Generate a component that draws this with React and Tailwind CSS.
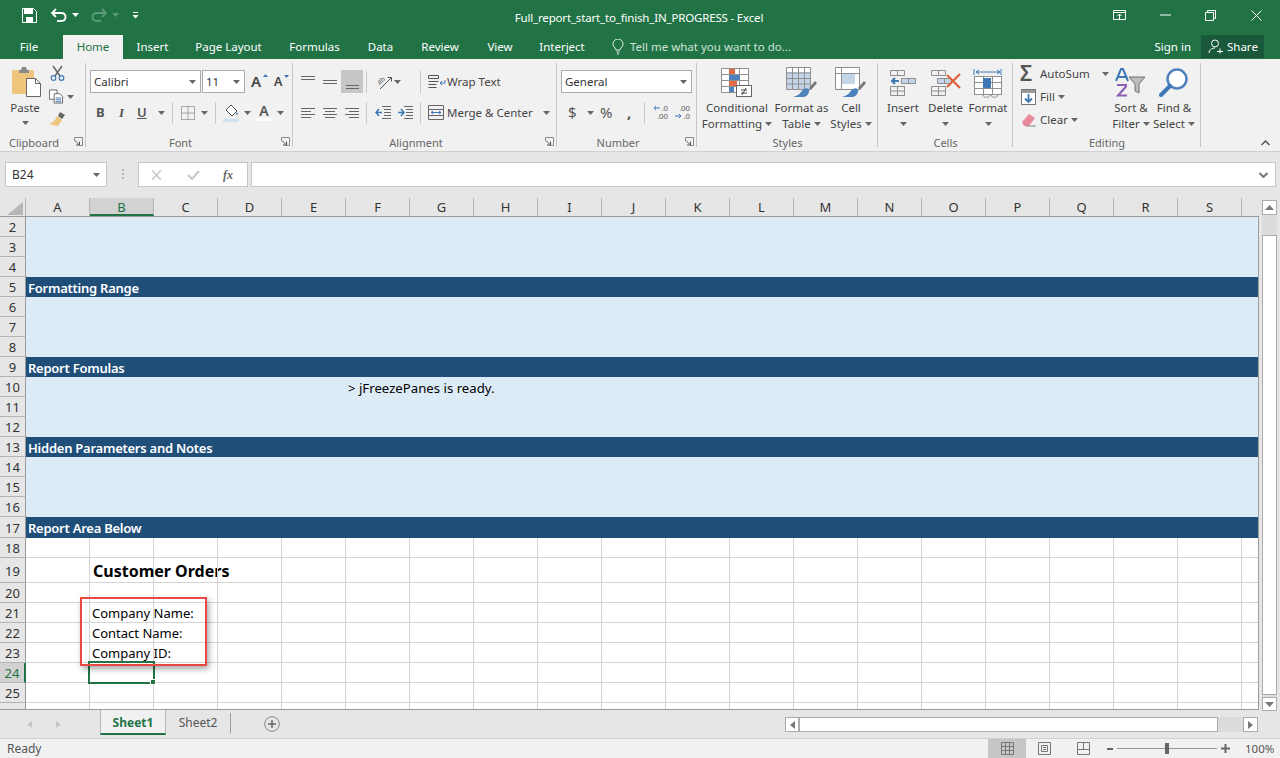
const ui = { fontFamily: '"Noto Sans", "Open Sans", sans-serif' };

const Caret = ({ className = "", color = "#666" }) => (
  <svg width="7" height="4" viewBox="0 0 7 4" className={"shrink-0 " + className}><path d="M0 0h7L3.500 4z" fill={color} /></svg>
);

const Sep = ({ className = "" }) => <div className={"w-px h-[22px] bg-[#c8c8c8] shrink-0 " + className} />;

function Launcher() {
  return (
    <svg width="9" height="9" viewBox="0 0 9 9" className="absolute right-[3px] bottom-[5px]">
      <path d="M.5 4V.5H8.500V8.500H5" fill="none" stroke="#888" />
      <path d="M1 3.500L5.500 8M5.500 4.500V8H2" fill="none" stroke="#555" />
    </svg>
  );
}

function Group({ w, label, launcher, children }) {
  return (
    <div className="relative shrink-0 h-[88px] mt-[4px] flex flex-col" style={{ width: w }}>
      <div className="flex-1 min-h-0">{children}</div>
      <div className={"h-[17px] text-center text-[11px] leading-[17px] text-[#666] " + (launcher ? "pr-[18px]" : "")}>{label}</div>
      {launcher && <Launcher />}
      <div className="absolute right-0 top-0 bottom-[4px] w-px bg-[#c6c6c6]" />
    </div>
  );
}

function LargeBtn({ w, icon, l1, l2 }) {
  return (
    <div className="flex flex-col items-center shrink-0 text-[11.500px] leading-[16px] text-[#444]" style={{ width: w }}>
      <div className="h-[34px] flex items-center justify-center">{icon}</div>
      <div className="whitespace-nowrap">{l1}</div>
      <div className="whitespace-nowrap flex items-center gap-[3px] h-[16px]">{l2}<Caret /></div>
    </div>
  );
}

const CELLGRID = "#8f8f8f";

function GridBase({ w = 30, h = 26, cols = 3, rows = 4, x = 0.5, y = 0.5 }) {
  const cw = w / cols, rh = h / rows;
  const d = [];
  for (let i = 0; i <= cols; i++) d.push(`M${x + i * cw} ${y}V${y + h}`);
  for (let i = 0; i <= rows; i++) d.push(`M${x} ${y + i * rh}H${x + w}`);
  return <path d={d.join("")} fill="none" stroke={CELLGRID} />;
}

const CondIcon = () => (
  <svg width="32" height="30" viewBox="0 0 32 30">
    <rect x=".5" y=".5" width="27" height="24" fill="#fff" />
    <GridBase w={27} h={24} cols={3} rows={4} />
    <rect x="8" y="1" width="6" height="5" fill="#e06c47" />
    <rect x="8" y="7" width="11" height="5" fill="#4d82bc" />
    <rect x="8" y="13" width="8" height="5" fill="#e06c47" />
    <rect x="8" y="19" width="5" height="5" fill="#4d82bc" />
    <rect x="15.500" y="17.500" width="15" height="11" fill="#fff" stroke="#666" />
    <path d="M20 22h6M20 25h6M25 20l-4 7" stroke="#444" fill="none" />
  </svg>
);

const TableIcon = () => (
  <svg width="32" height="32" viewBox="0 0 32 32">
    <rect x=".5" y=".5" width="24" height="22" fill="#fff" />
    <rect x="1" y="5" width="24" height="18" fill="#c5d5e8" />
    <GridBase w={24} h={22} cols={4} rows={4} />
    <path d="M23 21l6-7 2 2-6 7z" fill="#777" />
    <path d="M18 22c4-2 6 1 5 3-1 3-3 5-7 5h-9c3-1 6-2 8-5 1-1 2-3 3-3z" fill="#4d82bc" />
  </svg>
);

const CellStyleIcon = () => (
  <svg width="32" height="32" viewBox="0 0 32 32">
    <rect x=".5" y=".5" width="24" height="22" fill="#fff" />
    <rect x="6" y="6" width="14" height="11" fill="#c5d5e8" />
    <path d="M.5.500h24v22H.5zM6.500.500v22M.5 6.500h24" fill="none" stroke={CELLGRID} />
    <path d="M23 21l6-7 2 2-6 7z" fill="#777" />
    <path d="M18 22c4-2 6 1 5 3-1 3-3 5-7 5h-9c3-1 6-2 8-5 1-1 2-3 3-3z" fill="#4d82bc" />
  </svg>
);

const InsertIcon = () => (
  <svg width="28" height="28" viewBox="0 0 28 28">
    <path d="M1.500 1.500h14v5h-14zM8.500 1.500v5M1.500 17.500h14v9h-14zM8.500 17.500v9M1.500 22h14" fill="none" stroke={CELLGRID} />
    <path d="M12.500 9.500h14v5h-14zM19.500 9.500v5" fill="#c5d5e8" stroke={CELLGRID} />
    <path d="M10 12H3M6 9l-3 3 3 3" fill="none" stroke="#3f78b5" strokeWidth="2" />
  </svg>
);

const DeleteIcon = () => (
  <svg width="32" height="28" viewBox="0 0 32 28">
    <path d="M1.500 1.500h14v5h-14zM8.500 1.500v5M1.500 17.500h14v9h-14zM8.500 17.500v9M1.500 22h14" fill="none" stroke={CELLGRID} />
    <path d="M7.500 9.500h14v5h-14zM14.500 9.500v5" fill="#c5d5e8" stroke={CELLGRID} />
    <path d="M17 6l13 13M30 5L17 18" stroke="#e0633c" strokeWidth="2.200" fill="none" />
  </svg>
);

const FormatIcon = () => (
  <svg width="30" height="31" viewBox="0 0 30 31">
    <path d="M1 1v6M28 1v6M3 4h24M3 4l3-2M3 4l3 2M27 4l-3-2M27 4l-3 2" stroke="#3f78b5" fill="none" />
    <rect x="1.500" y="8.500" width="27" height="18" fill="#fff" stroke={CELLGRID} />
    <path d="M10.500 8.500v18M19.500 8.500v18M1.500 14.500h27M1.500 20.500h27" stroke={CELLGRID} fill="none" />
    <rect x="10" y="10" width="8" height="10" fill="#3f78b5" />
    <path d="M10 27c0 3 7 3 7 0M18 27c0 3 7 3 7 0" stroke={CELLGRID} fill="none" />
  </svg>
);

const SortIcon = () => (
  <svg width="32" height="30" viewBox="0 0 32 30">
    <path d="M1 13L6 1h2l5 12M3.500 9h7" stroke="#3f78b5" strokeWidth="2" fill="none" />
    <path d="M2 17h9v1.500L3 27.500h9" stroke="#8a5fb5" strokeWidth="2" fill="none" />
    <path d="M14 9h16l-6 7v9l-4-2v-7z" fill="#bdbdbd" stroke="#707070" />
  </svg>
);

const FindIcon = () => (
  <svg width="30" height="30" viewBox="0 0 30 30">
    <circle cx="18" cy="11" r="9.500" fill="#fff" stroke="#4d82bc" strokeWidth="2.500" />
    <path d="M11 18L2 27" stroke="#3f78b5" strokeWidth="4" strokeLinecap="round" />
  </svg>
);

const Lines = ({ rows, color = "#666" }) => (
  <svg width="16" height="16" viewBox="0 0 16 16" className="shrink-0">
    {rows.map(([y, a, b], i) => <path key={i} d={`M${a} ${y}.5H${b}`} stroke={color} />)}
  </svg>
);

function AlignmentGroup() {
  return (
    <div className="pt-[7px] pl-[7px]">
      <div className="flex items-center h-[23px]">
        <div className="flex items-center gap-[6px] w-[41px]">
          <Lines rows={[[2, 1, 15], [5, 1, 15]]} />
          <Lines rows={[[6, 1, 15], [9, 1, 15]]} />
        </div>
        <div className="w-[22px] h-[23px] bg-[#c6c6c6] flex items-center justify-center">
          <Lines rows={[[11, 2, 15], [14, 2, 15]]} />
        </div>
        <Sep className="ml-[3px]" />
        <svg width="18" height="18" viewBox="0 0 18 18" className="ml-[8px] overflow-visible">
          <text x="2" y="10" fontSize="7" fill="#555" transform="rotate(-40 6 8)">ab</text>
          <path d="M5 16L16 5M12.500 4.500H16.500V8.500" stroke="#555" fill="none" />
        </svg>
        <Caret className="ml-[1px]" />
        <Sep className="ml-[19px]" />
        <div className="flex items-center ml-[7px] text-[11.500px] text-[#444]">
          <svg width="18" height="16" viewBox="0 0 18 16">
            <path d="M.5 1.500h10v3H.5zM.5 7.500h10M.5 10.500h8M.5 13.500h8" stroke="#555" fill="none" />
            <path d="M17 6v3h-5M14 7l-2 2 2 2" stroke="#3f78b5" fill="none" />
          </svg>
          <span className="ml-[1px] whitespace-nowrap">Wrap Text</span>
        </div>
      </div>
      <div className="flex items-center h-[23px] mt-[8px]">
        <div className="flex items-center gap-[6px] w-[63px]">
          <Lines rows={[[3, 1, 15], [6, 1, 11], [9, 1, 15], [12, 1, 11]]} />
          <Lines rows={[[3, 1, 15], [6, 3, 13], [9, 1, 15], [12, 3, 13]]} />
          <Lines rows={[[3, 1, 15], [6, 5, 15], [9, 1, 15], [12, 5, 15]]} />
        </div>
        <Sep className="ml-[3px]" />
        <svg width="17" height="13" viewBox="0 0 17 13" className="ml-[8px]">
          <path d="M7 .5h9M9 3.500h7M9 6.500h7M9 9.500h7M7 12.500h9" stroke="#666" fill="none" />
          <path d="M7 6.500H1M4 3L1 6.500 4 10" stroke="#3f78b5" strokeWidth="1.500" fill="none" />
        </svg>
        <svg width="17" height="13" viewBox="0 0 17 13" className="ml-[5px]">
          <path d="M7 .5h9M9 3.500h7M9 6.500h7M9 9.500h7M7 12.500h9" stroke="#666" fill="none" />
          <path d="M1 6.500h6M4 3l3 3.500L4 10" stroke="#3f78b5" strokeWidth="1.500" fill="none" />
        </svg>
        <Sep className="ml-[6px]" />
        <div className="flex items-center ml-[7px] text-[11.500px] text-[#444]">
          <svg width="16" height="15" viewBox="0 0 16 15">
            <path d="M.5.500h15v14H.5zM.5 4.500h15M.5 10.500h15" stroke="#666" fill="none" />
            <path d="M3 7.500h10M5 6L3 7.500 5 9M11 6l2 1.500L11 9" stroke="#3f78b5" fill="none" />
          </svg>
          <span className="ml-[3px] whitespace-nowrap">Merge &amp; Center</span>
          <Caret className="ml-[10px]" />
        </div>
      </div>
    </div>
  );
}

function Combo({ w, text, className = "" }) {
  return (
    <div className={"h-[23px] bg-white border border-[#ababab] flex items-center justify-between pl-[3px] pr-[4px] text-[11.500px] text-[#333] " + className} style={{ width: w }}>
      <span>{text}</span><Caret />
    </div>
  );
}

function FontGroup() {
  return (
    <div className="pt-[7px] pl-[4px]">
      <div className="flex items-center h-[23px]">
        <Combo w={111} text="Calibri" />
        <Combo w={43} text="11" className="ml-[1px]" />
        <span className="relative ml-[6px] w-[17px] text-[15px] text-[#444] font-semibold leading-[23px]">A<svg width="5" height="3" className="absolute right-0 top-[4px]"><path d="M0 3h5L2.500 0z" fill="#3f78b5" /></svg></span>
        <span className="relative ml-[6px] w-[12px] text-[12.500px] text-[#444] font-semibold leading-[23px]">A<svg width="5" height="3" className="absolute right-[-3px] top-[5px]"><path d="M0 0h5L2.500 3z" fill="#3f78b5" /></svg></span>
      </div>
      <div className="flex items-center h-[23px] mt-[8px] text-[#555]">
        <span className="ml-[6px] w-[16px] text-[13px] font-bold">B</span>
        <span className="ml-[7px] w-[14px] text-[13px] italic font-semibold" style={{ fontFamily: '"Liberation Serif", serif' }}>I</span>
        <span className="ml-[4px] w-[17px] text-[13px] font-semibold underline">U</span>
        <Caret className="ml-[4px]" />
        <Sep className="ml-[7px]" />
        <svg width="14" height="14" viewBox="0 0 14 14" className="ml-[8px]">
          <path d="M.5.500h13v13H.5zM7 .5v13M.5 7h13" stroke="#666" strokeDasharray="1 1" fill="none" />
        </svg>
        <Caret className="ml-[6px]" />
        <Sep className="ml-[7px]" />
        <svg width="16" height="18" viewBox="0 0 16 18" className="ml-[7px]">
          <path d="M8 1l6 6-5 5-6-6z" fill="#fff" stroke="#555" />
          <path d="M14 8c1 1 1 3 0 3s-1-2 0-3z" fill="#3f78b5" />
          <rect y="15" width="16" height="3" fill="#cfe0f0" />
        </svg>
        <Caret className="ml-[5px]" />
        <span className="ml-[5px] flex flex-col items-center w-[16px] leading-[14px] text-[14px] font-semibold">A<span className="block w-[16px] h-[3px] bg-white" /></span>
        <Caret className="ml-[5px]" />
      </div>
    </div>
  );
}

function ClipboardGroup() {
  return (
    <div className="flex pt-[3px] pl-[9px]">
      <div className="w-[32px] flex flex-col items-center text-[11.500px] leading-[16px] text-[#444]">
        <svg width="30" height="31" viewBox="0 0 30 31" className="ml-[3px]">
          <rect y="4" width="22" height="24" rx="1.500" fill="#eec77d" />
          <path d="M7 4h2l1-3h4l1 3h2v3H7z" fill="#8a8a8a" />
          <path d="M14.500 12.500h9l5 5v13h-14z" fill="#fff" stroke="#666" />
          <path d="M23.500 12.500v5h5" fill="none" stroke="#666" />
        </svg>
        <div className="mt-[3px]">Paste</div>
        <Caret className="mt-[5px]" />
      </div>
      <div className="ml-[8px] w-[25px] flex flex-col">
        <svg width="15" height="16" viewBox="0 0 15 16" className="ml-[1px] -mt-[1px]">
          <path d="M3 1l7 10M12 1L5 11" stroke="#666" strokeWidth="1.500" fill="none" />
          <circle cx="3.500" cy="13" r="2.300" fill="none" stroke="#3f78b5" strokeWidth="1.200" />
          <circle cx="11.500" cy="13" r="2.300" fill="none" stroke="#3f78b5" strokeWidth="1.200" />
        </svg>
        <div className="flex items-center mt-[8px]">
          <svg width="16" height="15" viewBox="0 0 16 15">
            <path d="M.5.500h8v10h-8z" fill="#fff" stroke="#666" />
            <path d="M5.500 4.500h6l3 3v7h-9z" fill="#fff" stroke="#666" />
            <path d="M7 9h6M7 11h6M7 13h6" stroke="#3f78b5" />
          </svg>
          <Caret className="ml-[3px]" />
        </div>
        <svg width="17" height="15" viewBox="0 0 17 15" className="mt-[7px]">
          <path d="M11 1l5 3-3 4-4-3z" fill="#666" />
          <path d="M8 5l5 4-4 6-9-2c3-1 6-3 8-8z" fill="#eec77d" />
        </svg>
      </div>
    </div>
  );
}

const decimal = { fontFamily: '"Liberation Sans", sans-serif' };

function NumberGroup() {
  return (
    <div className="pt-[7px] pl-[4px]">
      <Combo w={131} text="General" />
      <div className="flex items-center h-[23px] mt-[8px] text-[#555]">
        <span className="ml-[7px] w-[10px] text-[15px] leading-[23px]">$</span>
        <Caret className="ml-[9px]" />
        <span className="ml-[6px] w-[19px] text-[15px] leading-[23px]">%</span>
        <span className="ml-[8px] w-[8px] text-[15px] font-bold leading-[19px]">,</span>
        <Sep className="ml-[9px]" />
        <div className="ml-[7px] w-[16px] flex flex-col items-end text-[8px]" style={decimal}>
          <div className="h-[8px] leading-[8px] whitespace-nowrap">
            <svg width="7" height="6" className="inline mr-[1px]"><path d="M7 3H1M3 1L1 3l2 2" stroke="#3f78b5" fill="none" /></svg>.0
          </div>
          <div className="h-[8px] leading-[8px]">.00</div>
        </div>
        <div className="ml-[6px] w-[16px] flex flex-col items-end text-[8px]" style={decimal}>
          <div className="h-[8px] leading-[8px]">.00</div>
          <div className="h-[8px] leading-[8px] whitespace-nowrap">
            <svg width="7" height="6" className="inline mr-[1px]"><path d="M0 3h6M4 1l2 2-2 2" stroke="#3f78b5" fill="none" /></svg>.0
          </div>
        </div>
      </div>
    </div>
  );
}

function EditingGroup() {
  return (
    <div className="flex pt-[3px] text-[11.500px] text-[#444]">
      <div className="w-[97px] pl-[7px] -mt-[4px] flex flex-col">
        <div className="flex items-center h-[23px]">
          <span className="w-[17px] text-[21px] leading-[23px] font-semibold text-[#555]">Σ</span>
          <span className="ml-[3px] whitespace-nowrap">AutoSum</span>
          <Caret className="ml-[12px]" />
        </div>
        <div className="flex items-center h-[23px]">
          <svg width="15" height="16" viewBox="0 0 15 16" className="ml-[1px]">
            <rect x=".5" y=".5" width="14" height="15" fill="#fff" stroke="#777" />
            <rect x="1" y="1" width="13" height="3" fill="#999" />
            <path d="M7.500 5v8M4 9.500l3.500 3.500L11 9.500" stroke="#3f78b5" strokeWidth="1.800" fill="none" />
          </svg>
          <span className="ml-[4px]">Fill</span><Caret className="ml-[3px]" />
        </div>
        <div className="flex items-center h-[23px]">
          <svg width="16" height="14" viewBox="0 0 16 14" className="ml-[1px]">
            <path d="M1 9l7-8 6 4-6 8H3z" fill="#e88a9a" />
            <path d="M5 13h10" stroke="#888" />
          </svg>
          <span className="ml-[3px]">Clear</span><Caret className="ml-[3px]" />
        </div>
      </div>
      <LargeBtn w={42} icon={<SortIcon />} l1="Sort &" l2="Filter" />
      <LargeBtn w={44} icon={<FindIcon />} l1="Find &" l2="Select" />
    </div>
  );
}

function Ribbon() {
  return (
    <div className="h-[93px] bg-[#f1f1f1] border-b border-[#d0d0d0] flex relative">
      <Group w={86} label="Clipboard" launcher><ClipboardGroup /></Group>
      <Group w={207} label="Font" launcher><FontGroup /></Group>
      <Group w={264} label="Alignment" launcher><AlignmentGroup /></Group>
      <Group w={140} label="Number" launcher><NumberGroup /></Group>
      <Group w={181} label="Styles">
        <div className="flex pt-[3px] pl-[4px]">
          <LargeBtn w={72} icon={<CondIcon />} l1="Conditional" l2="Formatting" />
          <LargeBtn w={57} icon={<TableIcon />} l1="Format as" l2="Table" />
          <LargeBtn w={42} icon={<CellStyleIcon />} l1="Cell" l2="Styles" />
        </div>
      </Group>
      <Group w={135} label="Cells">
        <div className="flex pt-[3px] pl-[4px]">
          <LargeBtn w={42} icon={<InsertIcon />} l1="Insert" l2="" />
          <LargeBtn w={43} icon={<DeleteIcon />} l1="Delete" l2="" />
          <LargeBtn w={42} icon={<FormatIcon />} l1="Format" l2="" />
        </div>
      </Group>
      <Group w={188} label="Editing"><EditingGroup /></Group>
      <svg width="9" height="6" viewBox="0 0 9 6" className="absolute left-[1261px] top-[81px]"><path d="M.5 5l4-4 4 4" stroke="#555" strokeWidth="1.500" fill="none" /></svg>
    </div>
  );
}

function TitleBar() {
  return (
    <div className="h-[35px] relative flex items-center pb-[5px] text-white">
      <svg width="15" height="15" viewBox="0 0 15 15" className="ml-[22px]">
        <path d="M.5.500h11l3 3v11H.5z" fill="none" stroke="#fff" />
        <rect x="2" y="1" width="9" height="5" fill="#fff" />
        <rect x="4" y="9" width="7" height="5" fill="#fff" />
      </svg>
      <svg width="16" height="14" viewBox="0 0 16 14" className="ml-[14px]">
        <path d="M2 5h8c6 0 6 8 0 8H6M5 1L1 5l4 4" fill="none" stroke="#fff" strokeWidth="1.800" />
      </svg>
      <Caret color="#fff" className="ml-[5px]" />
      <svg width="16" height="14" viewBox="0 0 16 14" className="ml-[12px]">
        <path d="M14 5H6c-6 0-6 8 0 8h4M11 1l4 4-4 4" fill="none" stroke="#5c9a7a" strokeWidth="1.800" />
      </svg>
      <Caret color="#5c9a7a" className="ml-[5px]" />
      <svg width="7" height="7" viewBox="0 0 7 7" className="ml-[13px]"><path d="M1 .5h5" stroke="#fff" /><path d="M.5 3h6L3.500 6.500z" fill="#fff" /></svg>
      <div className="absolute inset-x-0 top-[9px] pr-[2px] text-center text-[11.500px] tracking-[-0.17px] leading-[18px]">Full_report_start_to_finish_IN_PROGRESS - Excel</div>
      <div className="absolute right-0 top-0 h-[30px] flex items-center">
        <svg width="14" height="11" viewBox="0 0 14 11" className="mr-[33px]"><path d="M.5.500h12v9H.5zM.5 2.500h12M6.500 9V4M4.500 6l2-2 2 2" stroke="#fff" fill="none" /></svg>
        <svg width="11" height="2" viewBox="0 0 11 2" className="mr-[34px]"><path d="M0 1h11" stroke="#fff" /></svg>
        <svg width="11" height="11" viewBox="0 0 11 11" className="mr-[35px]"><path d="M.5 2.500h8v8h-8zM2.500 2.500v-2h8v8h-2" stroke="#fff" fill="none" /></svg>
        <svg width="11" height="11" viewBox="0 0 11 11" className="mr-[18px]"><path d="M.5.500l10 10M10.500.500l-10 10" stroke="#fff" /></svg>
      </div>
    </div>
  );
}

const tabs = [["Insert", 59], ["Page Layout", 93], ["Formulas", 79], ["Data", 53], ["Review", 66], ["View", 54], ["Interject", 70]];

function TabBar() {
  return (
    <div className="h-[24px] flex text-[11.500px] leading-[24px] text-white">
      <div className="w-[63px] pr-[5px] text-center">File</div>
      <div className="w-[60px] text-center bg-[#f1f1f1] text-[#217346]">Home</div>
      {tabs.map(([t, w]) => <div key={t} className="text-center shrink-0" style={{ width: w }}>{t}</div>)}
      <svg width="12" height="16" viewBox="0 0 12 16" className="ml-[15px] mt-[4px]">
        <path d="M4 11C3 8 1 7.500 1 5a5 5 0 0 1 10 0c0 2.500-2 3-3 6zM4.500 13h3M5 15h2" fill="none" stroke="#e6f0ea" />
      </svg>
      <div className="ml-[6px] text-[#cfe3d8] whitespace-nowrap">Tell me what you want to do...</div>
      <div className="ml-auto mr-[10px] whitespace-nowrap">Sign in</div>
      <div className="w-[63px] h-[23px] mr-[16px] bg-[#19583a] flex items-center pl-[7px] leading-[23px]">
        <svg width="15" height="15" viewBox="0 0 15 15"><circle cx="7" cy="4.500" r="3.500" fill="none" stroke="#fff" /><path d="M1 14c0-3 3-5 6-5M9 12.500h6M12 9.500v5" fill="none" stroke="#fff" /></svg>
        <span className="ml-[4px]">Share</span>
      </div>
    </div>
  );
}

function FormulaBar() {
  return (
    <div className="h-[46px] flex pt-[10px] pl-[5px]">
      <div className="w-[102px] h-[25px] bg-white border border-[#c6c6c6] flex items-center justify-between pl-[6px] pr-[6px] text-[12px] text-[#333]">
        <span>B24</span><Caret />
      </div>
      <svg width="3" height="11" viewBox="0 0 3 11" className="ml-[14px] mt-[7px]"><path d="M1 0h2v2H1zM1 4h2v2H1zM1 8h2v2H1z" fill="#b5b5b5" /></svg>
      <div className="ml-[14px] w-[110px] h-[25px] bg-white border border-[#c6c6c6] flex items-center">
        <svg width="11" height="10" viewBox="0 0 11 10" className="ml-[12px]"><path d="M1 0l9 10M10 0L1 10" stroke="#c8c8c8" strokeWidth="1.500" /></svg>
        <svg width="13" height="10" viewBox="0 0 13 10" className="ml-[25px]"><path d="M1 5l4 4 7-8" stroke="#c8c8c8" strokeWidth="2" fill="none" /></svg>
        <span className="ml-[23px] text-[12px] italic font-bold text-[#666]" style={{ fontFamily: '"Liberation Serif", serif' }}>fx</span>
      </div>
      <div className="ml-[3px] w-[1025px] h-[25px] bg-white border border-[#c6c6c6] flex items-center justify-end pr-[7px]">
        <svg width="9" height="6" viewBox="0 0 9 6"><path d="M.5 1l4 4 4-4" stroke="#777" strokeWidth="2" fill="none" /></svg>
      </div>
    </div>
  );
}

const colNames = "ABCDEFGHIJKLMNOPQRS".split("");
const colWidths = [...Array(19).fill(64), 16];

const rows = [
  { n: 2, h: 20, k: "band" }, { n: 3, h: 20, k: "band" }, { n: 4, h: 20, k: "band" },
  { n: 5, h: 20, k: "head", t: "Formatting Range" },
  { n: 6, h: 20, k: "band" }, { n: 7, h: 20, k: "band" }, { n: 8, h: 20, k: "band" },
  { n: 9, h: 20, k: "head", t: "Report Fomulas" },
  { n: 10, h: 20, k: "band", note: "> jFreezePanes is ready." }, { n: 11, h: 20, k: "band" }, { n: 12, h: 20, k: "band" },
  { n: 13, h: 20, k: "head", t: "Hidden Parameters and Notes" },
  { n: 14, h: 20, k: "band" }, { n: 15, h: 20, k: "band" }, { n: 16, h: 20, k: "band" },
  { n: 17, h: 21, k: "head", t: "Report Area Below" },
  { n: 18, h: 20 },
  { n: 19, h: 25, title: "Customer Orders" },
  { n: 20, h: 20 },
  { n: 21, h: 20, b: "Company Name:" },
  { n: 22, h: 20, b: "Contact Name:" },
  { n: 23, h: 20, b: "Company ID:" },
  { n: 24, h: 20, sel: true },
  { n: 25, h: 20 },
  { n: 26, h: 20 },
];

function RowHead({ r }) {
  return (
    <div className={"w-[26px] shrink-0 border-b border-[#b4b4b4] border-r text-center text-[13px] " + (r.sel ? "bg-[#d2d2d2] text-[#217346] border-r-2 border-r-[#217346]" : "bg-[#e6e6e6] text-[#333] border-r-[#9b9b9b]")} style={{ lineHeight: r.h + 1 + "px" }}>
      {r.n}
    </div>
  );
}

function GridRow({ r }) {
  if (r.k) {
    const head = r.k === "head";
    return (
      <div className="flex" style={{ height: r.h }}>
        <RowHead r={r} />
        <div className={"flex-1 relative text-[13px] " + (head ? "bg-[#1f4e79] text-white font-semibold pl-[2px] pt-[2px] tracking-[-0.25px]" : "bg-[#ddebf7] text-black")} style={{ lineHeight: r.h - 2 + "px" }}>
          {r.t}
          {r.note && <div className="ml-[322px] pt-[2px] whitespace-nowrap text-[13.200px]">{r.note}</div>}
        </div>
      </div>
    );
  }
  return (
    <div className="flex bg-white" style={{ height: r.h }}>
      <RowHead r={r} />
      {colWidths.map((w, i) => (
        <div key={i} className={"shrink-0 border-b border-[#d4d4d4] whitespace-nowrap text-black " + (i === colWidths.length - 1 ? "" : "border-r")} style={{ width: w }}>
          {i === 1 && r.b && <div className="pl-[2px] text-[13px]" style={{ lineHeight: r.h + 1 + "px" }}>{r.b}</div>}
          {i === 1 && r.title && <div className="pl-[3px] text-[16px] font-bold" style={{ lineHeight: r.h + 1 + "px" }}>{r.title}</div>}
        </div>
      ))}
    </div>
  );
}

function Sheet() {
  return (
    <div className="flex flex-col w-[1259px]">
      <div className="h-[19px] flex border-b border-[#9b9b9b] pr-[1px]">
        <div className="w-[26px] shrink-0 relative border-r border-[#b4b4b4]">
          <svg width="16" height="13" viewBox="0 0 16 13" className="absolute left-[7px] top-[4px]"><path d="M16 0v13H0z" fill="#b6b6b6" /></svg>
        </div>
        {colNames.map((c, i) => (
          <div key={c} className={"shrink-0 border-r border-[#b4b4b4] text-center text-[13px] leading-[18px] " + (c === "B" ? "bg-[#d2d2d2] text-[#217346] border-b-2 border-b-[#217346]" : "text-[#333]")} style={{ width: colWidths[i] }}>{c}</div>
        ))}
      </div>
      <div className="relative h-[493px] overflow-hidden border-r border-b border-[#9b9b9b]">
        {rows.map((r) => <GridRow key={r.n} r={r} />)}
        <div className="absolute left-[88px] top-[444px] w-[67px] h-[23px] border-2 border-[#217346]">
          <div className="absolute right-[-3px] bottom-[-3px] w-[6px] h-[6px] bg-[#217346] border border-white" />
        </div>
        <div className="absolute left-[80px] top-[380px] w-[127px] h-[69px] border-2 border-[#e8483f] shadow-[2px_3px_6px_rgba(0,0,0,0.35)]" />
      </div>
    </div>
  );
}

function VScroll() {
  return (
    <div className="ml-[3px] w-[15px] h-[511px] mt-[2px] flex flex-col bg-[#dcdcdc]">
      <div className="h-[15px] bg-white border border-[#ababab] flex items-center justify-center"><svg width="9" height="5"><path d="M0 5h9L4.500 0z" fill="#777" /></svg></div>
      <div className="mt-[20px] h-[460px] bg-white border border-[#ababab]" />
      <div className="mt-[2px] h-[14px] bg-white border border-[#ababab] flex items-center justify-center"><svg width="9" height="5"><path d="M0 0h9L4.500 5z" fill="#777" /></svg></div>
    </div>
  );
}

function SheetTabs() {
  return (
    <div className="h-[28px] flex items-start text-[12px]">
      <svg width="5" height="7" viewBox="0 0 5 7" className="ml-[27px] mt-[11px]"><path d="M5 0v7L0 3.500z" fill="#c4c4c4" /></svg>
      <svg width="5" height="7" viewBox="0 0 5 7" className="ml-[24px] mt-[11px]"><path d="M0 0v7l5-3.500z" fill="#c4c4c4" /></svg>
      <div className="ml-[39px] w-[66px] h-[25px] bg-[#f1f1f1] border-x border-[#b4b4b4] border-b-2 border-b-[#217346] text-center font-bold text-[#217346] leading-[26px]">Sheet1</div>
      <div className="w-[64px] text-center text-[#555] leading-[26px] h-[25px]">Sheet2</div>
      <div className="w-px h-[20px] mt-[3px] bg-[#9b9b9b]" />
      <svg width="16" height="16" viewBox="0 0 16 16" className="ml-[33px] mt-[6px]"><circle cx="8" cy="8" r="7.300" fill="none" stroke="#888" /><path d="M8 4v8M4 8h8" stroke="#666" strokeWidth="1.500" /></svg>
      <div className="ml-[505px] mt-[7px] h-[15px] flex">
        <div className="w-[14px] bg-white border border-[#ababab] flex items-center justify-center"><svg width="5" height="8"><path d="M5 0v8L0 4z" fill="#777" /></svg></div>
        <div className="w-[419px] bg-white border border-[#ababab]" />
        <div className="w-[25px] bg-[#dcdcdc]" />
        <div className="w-[15px] bg-white border border-[#ababab] flex items-center justify-center"><svg width="5" height="8"><path d="M0 0v8l5-4z" fill="#777" /></svg></div>
      </div>
    </div>
  );
}

function StatusBar() {
  return (
    <div className="h-[20px] bg-[#f1f1f1] border-t border-[#d0d0d0] flex items-center text-[12px] text-[#555]">
      <span className="ml-[7px]">Ready</span>
      <div className="ml-auto w-[38px] h-[19px] bg-[#c6c6c6] flex items-center justify-center">
        <svg width="13" height="13" viewBox="0 0 13 13"><path d="M.5.500h12v12H.5zM4.500.500v12M8.500.500v12M.5 4.500h12M.5 8.500h12" stroke="#777" fill="none" /></svg>
      </div>
      <svg width="13" height="13" viewBox="0 0 13 13" className="ml-[12px]"><path d="M.5.500h12v12H.5zM3.500 3.500h6v6h-6zM5 5.500h3M5 7.500h3" stroke="#777" fill="none" /></svg>
      <svg width="13" height="13" viewBox="0 0 13 13" className="ml-[26px]"><path d="M.5.500h12v12H.5zM.5 7.500h12M6.500.500v7" stroke="#777" fill="none" /></svg>
      <div className="ml-[17px] w-[6px] h-[2px] bg-[#666]" />
      <div className="ml-[4px] w-[100px] h-px bg-[#999] relative">
        <div className="absolute left-[48px] top-[-5px] w-[4px] h-[11px] bg-[#666]" />
      </div>
      <svg width="9" height="9" viewBox="0 0 9 9" className="ml-[4px]"><path d="M0 4.500h9M4.500 0v9" stroke="#666" strokeWidth="2" /></svg>
      <span className="ml-[15px] w-[30px] mr-[5px] text-[11.500px] whitespace-nowrap">100%</span>
    </div>
  );
}

export default function App() {
  return (
    <div className="w-[1280px] h-[758px] overflow-hidden bg-[#e6e6e6] flex flex-col" style={ui}>
      <div className="bg-[#217346]">
        <TitleBar />
        <TabBar />
      </div>
      <Ribbon />
      <FormulaBar />
      <div className="flex h-[512px]">
        <Sheet />
        <VScroll />
      </div>
      <SheetTabs />
      <StatusBar />
    </div>
  );
}
